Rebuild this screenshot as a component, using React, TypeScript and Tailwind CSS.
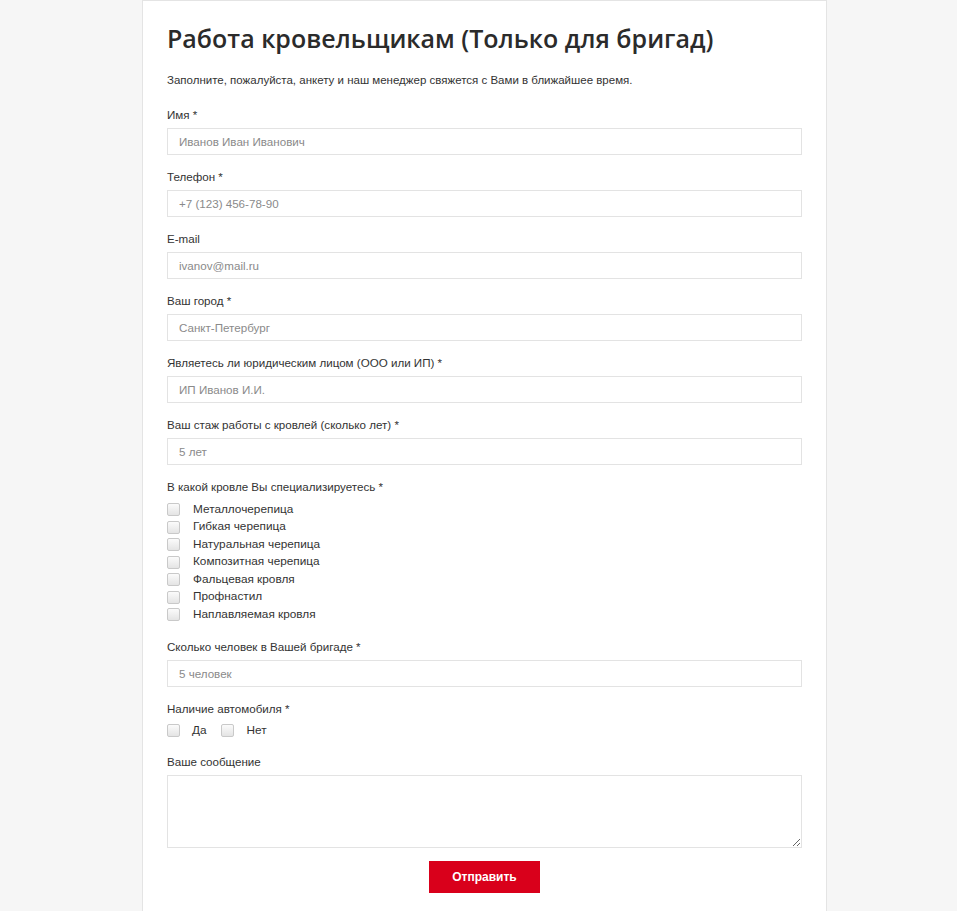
import React from 'react';

const roofTypes = [
  'Металлочерепица',
  'Гибкая черепица',
  'Натуральная черепица',
  'Композитная черепица',
  'Фальцевая кровля',
  'Профнастил',
  'Наплавляемая кровля',
];

const fields = [
  { label: 'Имя *', placeholder: 'Иванов Иван Иванович' },
  { label: 'Телефон *', placeholder: '+7 (123) 456-78-90' },
  { label: 'E-mail', placeholder: 'ivanov@mail.ru' },
  { label: 'Ваш город *', placeholder: 'Санкт-Петербург' },
  { label: 'Являетесь ли юридическим лицом (ООО или ИП) *', placeholder: 'ИП Иванов И.И.' },
  { label: 'Ваш стаж работы с кровлей (сколько лет) *', placeholder: '5 лет' },
];

function Box() {
  return (
    <span className="block w-[13px] h-[13px] shrink-0 rounded-[2px] border border-[#c9c9c9] bg-gradient-to-b from-[#fbfbfb] to-[#e4e4e4]" />
  );
}

function Field({ label, placeholder }: { label: string; placeholder: string }) {
  return (
    <div className="mb-[14px]">
      <div className="h-4 leading-4 mb-[5px] text-[11.6px] text-[#333]">{label}</div>
      <input
        readOnly
        placeholder={placeholder}
        className="block w-full h-[27px] border border-[#e3e3e3] bg-white px-[11px] text-[11.6px] placeholder:text-[#8a8a8a] outline-none"
      />
    </div>
  );
}

export default function App() {
  return (
    <div className="min-h-[911px] bg-[#f6f6f6] pl-[142px]" style={{ fontFamily: '"Liberation Sans", Arial, sans-serif' }}>
      <div className="w-[685px] min-h-[930px] bg-white border border-[#e4e4e4] px-6 pt-[19px] pb-6">
        <h1
          className="text-[25px] leading-[36px] font-semibold text-[#2b2b2b] mb-[16px]"
          style={{ fontFamily: '"Open Sans", "Noto Sans", sans-serif' }}
        >
          Работа кровельщикам (Только для бригад)
        </h1>
        <p className="h-4 leading-4 text-[11.5px] text-[#333] mb-[19px]">
          Заполните, пожалуйста, анкету и наш менеджер свяжется с Вами в ближайшее время.
        </p>

        {fields.map((f) => (
          <Field key={f.label} label={f.label} placeholder={f.placeholder} />
        ))}

        <div className="mb-[15px]">
          <div className="h-4 leading-4 mb-[6px] text-[11.6px] text-[#333]">В какой кровле Вы специализируетесь *</div>
          <div className="flex flex-col">
            {roofTypes.map((t) => (
              <label key={t} className="flex items-center h-[17.5px] text-[11.8px] text-[#333]">
                <Box />
                <span className="ml-[13px]">{t}</span>
              </label>
            ))}
          </div>
        </div>

        <Field label="Сколько человек в Вашей бригаде *" placeholder="5 человек" />

        <div className="mb-[14px]">
          <div className="h-4 leading-4 mb-[5px] text-[11.6px] text-[#333]">Наличие автомобиля *</div>
          <div className="flex items-center h-[18px] text-[11.8px] text-[#333]">
            <Box />
            <span className="ml-[12px]">Да</span>
            <span className="ml-[14px]">
              <Box />
            </span>
            <span className="ml-[13px]">Нет</span>
          </div>
        </div>

        <div className="mb-[13px]">
          <div className="h-4 leading-4 mb-[5px] text-[11.6px] text-[#333]">Ваше сообщение</div>
          <textarea readOnly className="block w-full h-[73px] border border-[#e3e3e3] bg-white outline-none" />
        </div>

        <div className="flex justify-center">
          <button className="w-[111px] h-[32px] bg-[#d9001b] text-white text-[12px] font-bold">Отправить</button>
        </div>
      </div>
    </div>
  );
}
